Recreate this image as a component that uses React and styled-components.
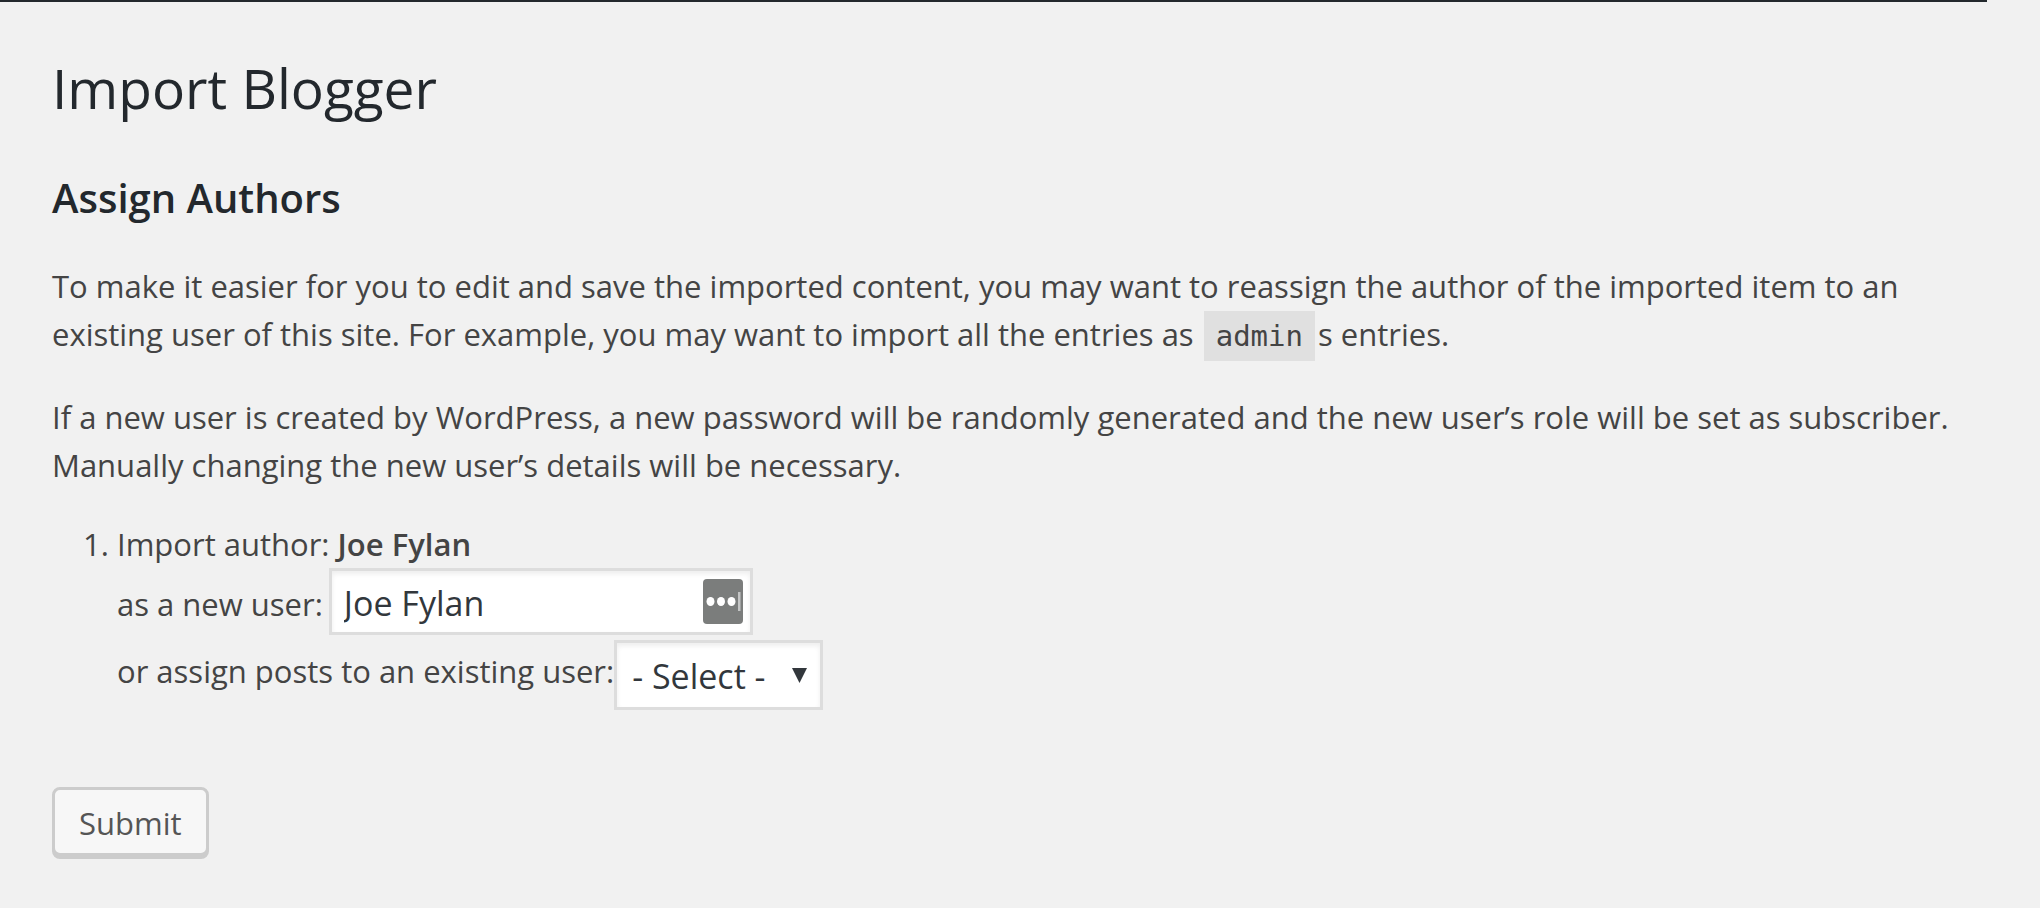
import React, { useState } from 'react';
import styled, { createGlobalStyle } from 'styled-components';

const GlobalStyle = createGlobalStyle`
  body {
    margin: 0;
    background: #f1f1f1;
    color: #444;
    font-family: 'Segoe UI', 'Open Sans', sans-serif;
    font-size: 31px;
    line-height: 48px;
  }
  * {
    box-sizing: border-box;
  }
`;

const AdminBar = styled.header`
  height: 2px;
  margin-right: 53px;
  background: #23282d;
`;

const Wrap = styled.main`
  padding: 46px 52px;
`;

const Title = styled.h1`
  margin: 0;
  font-size: 55px;
  font-weight: 400;
  line-height: 80px;
  color: #23282d;
`;

const SubTitle = styled.h2`
  margin: 44px 0 38px;
  font-size: 40px;
  font-weight: 600;
  line-height: 52px;
  color: #23282d;
`;

const Text = styled.p`
  margin: 0 0 ${({ $last }) => ($last ? '31px' : '35px')};
  max-width: 1900px;
`;

const Code = styled.code`
  margin: 0 3px 0 2px;
  padding: 8px 12px;
  background: #e0e0e0;
  font-family: Consolas, 'DejaVu Sans Mono', monospace;
  font-size: 29px;
  line-height: 1;
`;

const AuthorList = styled.ol`
  margin: 0;
  padding-left: 65px;

  strong {
    font-weight: 600;
  }
`;

const FieldRow = styled.div`
  display: flex;
  align-items: center;
  gap: ${({ $gap }) => $gap};
  margin-bottom: 5px;
`;

const NameLabel = styled.label`
  padding-top: 4px;
`;

const UserLabel = styled.label`
  padding-bottom: 8px;
`;

const ControlBox = styled.span`
  position: relative;
  display: flex;
`;

const TextInput = styled.input`
  width: 424px;
  height: 67px;
  padding: 2px 60px 0 12px;
  border: 3px solid #ddd;
  box-shadow: inset 0 3px 5px rgba(0, 0, 0, 0.07);
  background: #fff;
  color: #32373c;
  font: inherit;
  font-size: 34px;
`;

const FillIcon = styled.svg`
  position: absolute;
  top: 11px;
  right: 10px;
  width: 40px;
  height: 45px;
`;

const Select = styled.select`
  width: 209px;
  height: 70px;
  padding: 2px 15px 0;
  appearance: none;
  border: 3px solid #ddd;
  border-radius: 0;
  box-shadow: inset 0 3px 5px rgba(0, 0, 0, 0.07);
  background: #fff;
  color: #32373c;
  font: inherit;
  font-size: 34px;
`;

const Arrow = styled.svg`
  position: absolute;
  top: 28px;
  right: 16px;
  width: 15px;
  height: 15px;
  pointer-events: none;
`;

const SubmitButton = styled.button`
  height: 69px;
  margin-top: 72px;
  padding: 2px 24px 0;
  border: 3px solid #ccc;
  border-radius: 8px;
  box-shadow: 0 3px 0 #ccc;
  background: #f7f7f7;
  color: #555;
  font: inherit;
`;

const App = () => {
  const [name, setName] = useState('Joe Fylan');

  return (
    <>
      <GlobalStyle />
      <AdminBar />
      <Wrap>
        <Title>Import Blogger</Title>
        <SubTitle>Assign Authors</SubTitle>
        <Text>
          To make it easier for you to edit and save the imported content, you may want to reassign
          the author of the imported item to an existing user of this site. For example, you may
          want to import all the entries as <Code>admin</Code>s entries.
        </Text>
        <Text $last>
          If a new user is created by WordPress, a new password will be randomly generated and the
          new user’s role will be set as subscriber. Manually changing the new user’s details will
          be necessary.
        </Text>
        <form onSubmit={(e) => e.preventDefault()}>
          <AuthorList>
            <li>
              Import author: <strong>Joe Fylan</strong>
              <FieldRow $gap="6px">
                <NameLabel htmlFor="new-user">as a new user:</NameLabel>
                <ControlBox>
                  <TextInput
                    id="new-user"
                    type="text"
                    value={name}
                    onChange={(e) => setName(e.target.value)}
                  />
                  <FillIcon viewBox="0 0 40 45" aria-hidden="true">
                    <rect width="40" height="45" rx="4" fill="#7b7d7c" />
                    <ellipse cx="7.5" cy="22.5" rx="4" ry="4.5" fill="#fff" />
                    <ellipse cx="18" cy="22.5" rx="4" ry="4.5" fill="#fff" />
                    <ellipse cx="28.5" cy="22.5" rx="4" ry="4.5" fill="#fff" />
                    <rect x="35" y="13" width="2.5" height="19" fill="#c4c5c5" />
                  </FillIcon>
                </ControlBox>
              </FieldRow>
              <FieldRow $gap="0">
                <UserLabel htmlFor="existing-user">or assign posts to an existing user:</UserLabel>
                <ControlBox>
                  <Select id="existing-user">
                    <option>- Select -</option>
                  </Select>
                  <Arrow viewBox="0 0 15 15" aria-hidden="true">
                    <path d="M0 0h15L7.5 15z" fill="#32373c" />
                  </Arrow>
                </ControlBox>
              </FieldRow>
            </li>
          </AuthorList>
          <SubmitButton type="submit">Submit</SubmitButton>
        </form>
      </Wrap>
    </>
  );
};

export default App;
